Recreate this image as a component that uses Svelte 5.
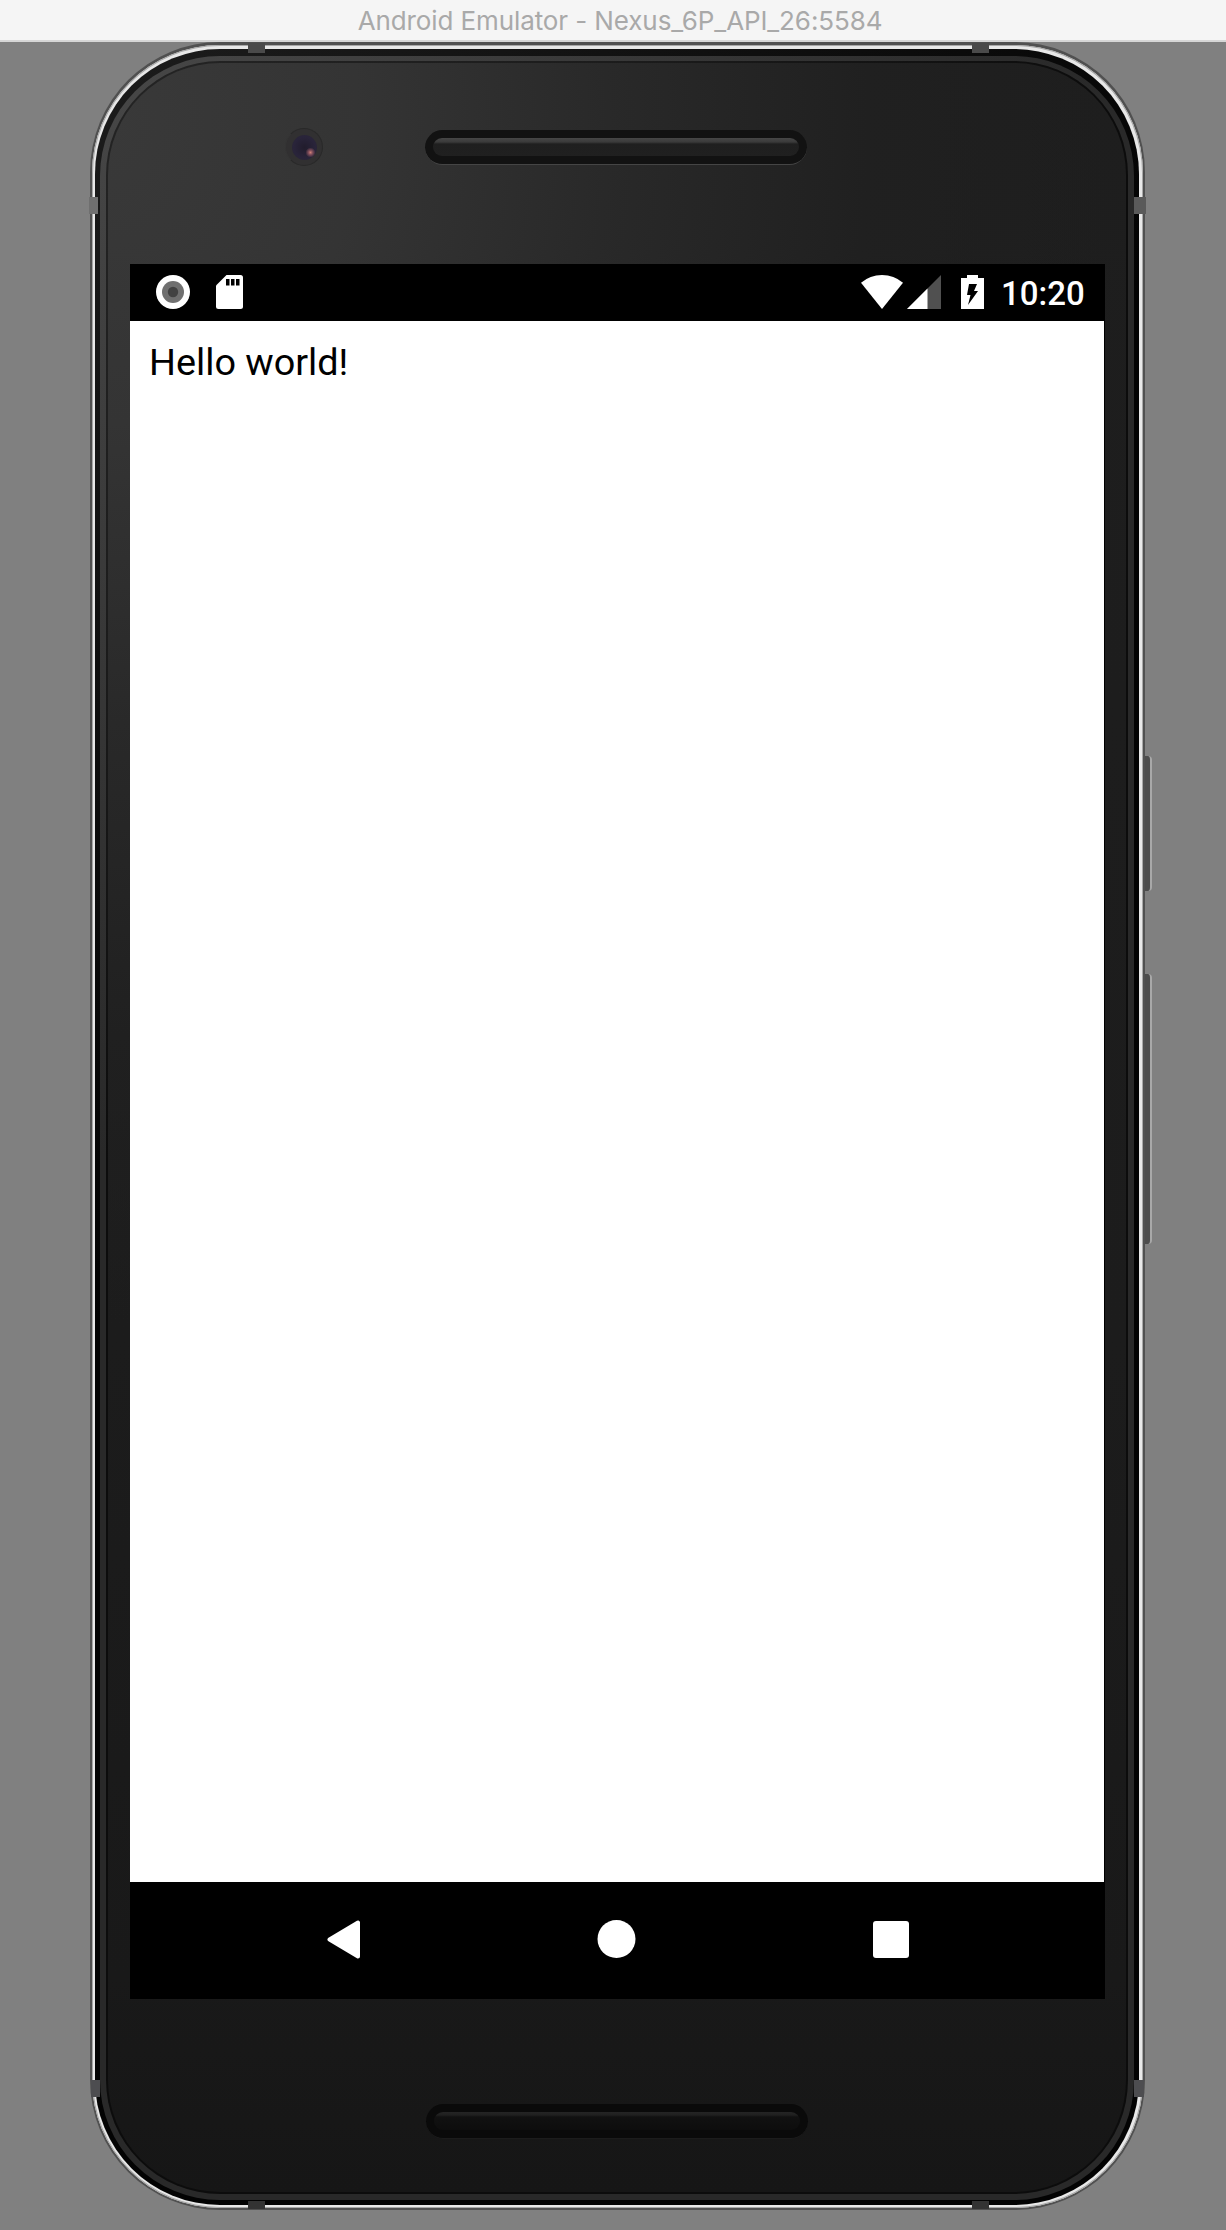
<script>
  const time = '10:20';
</script>

<div class="window">
  <header class="titlebar">Android Emulator - Nexus_6P_API_26:5584</header>
  <div class="stage">
    <div class="edge">
      <i class="key power"></i>
      <i class="key volume"></i>
      <i class="band t l1"></i><i class="band t r1"></i>
      <i class="band b l1"></i><i class="band b r1"></i>
      <i class="band s left up"></i><i class="band s right up"></i>
      <i class="band s left down"></i><i class="band s right down"></i>
      <div class="chrome">
        <div class="seam">
          <div class="lip">
            <div class="groove">
              <div class="face">
                <div class="top">
                  <span class="camera"><b></b></span>
                  <span class="speaker"><b></b></span>
                </div>
                <main class="screen">
                  <div class="status">
                    <svg width="34" height="34" viewBox="0 0 34 34">
                      <circle cx="17" cy="17" r="17" fill="#fff" />
                      <circle cx="17" cy="17" r="11" fill="#707070" />
                      <circle cx="17" cy="17" r="5.2" fill="#424242" />
                    </svg>
                    <svg class="sd" width="27" height="34" viewBox="0 0 27 34">
                      <path d="M10.5 0H24.5Q27 0 27 2.5V31.5Q27 34 24.5 34H2.5Q0 34 0 31.5V10.5Z" fill="#fff" />
                      <path d="M10 4h3.5v6.5H10zM15 4h3.5v6.5H15zM20 4h3.5v6.5H20z" fill="#000" />
                    </svg>
                    <span class="gap"></span>
                    <svg width="42" height="34" viewBox="0 0 42 34">
                      <path d="M21 34L0 7.8Q9 0 21 0T42 7.8Z" fill="#fff" />
                    </svg>
                    <svg class="cell" width="34" height="34" viewBox="0 0 34 34">
                      <path d="M34 0V34H0Z" fill="#505050" />
                      <path d="M20.5 13.5V34H0Z" fill="#fff" />
                    </svg>
                    <svg class="battery" width="23" height="34" viewBox="0 0 23 34">
                      <path d="M6 0H17V3H23V34H0V3H6Z" fill="#fff" />
                      <path d="M8 9H16L13 16H17L7 30L9.5 20H6Z" fill="#000" />
                    </svg>
                    <time>{time}</time>
                  </div>
                  <div class="content">Hello world!</div>
                  <nav>
                    <svg width="34" height="39" viewBox="0 0 34 39">
                      <path d="M2.5 19.5L31 2.5V36.5Z" fill="#fff" stroke="#fff" stroke-width="4" stroke-linejoin="round" />
                    </svg>
                    <svg class="home" width="39" height="39" viewBox="0 0 39 39">
                      <circle cx="19.5" cy="19" r="19" fill="#fff" />
                    </svg>
                    <svg class="recent" width="36" height="37" viewBox="0 0 36 37">
                      <rect width="36" height="37" rx="3" fill="#fff" />
                    </svg>
                  </nav>
                </main>
                <div class="bottom"><span class="speaker low"><b></b></span></div>
              </div>
            </div>
          </div>
        </div>
      </div>
    </div>
  </div>
</div>

<style>
  :global(body) {
    margin: 0;
    background: #808080;
  }
  .window {
    width: 1226px;
    height: 2230px;
    overflow: hidden;
    background: #808080;
    font-family: Roboto, sans-serif;
  }
  .window * {
    box-sizing: border-box;
  }
  svg {
    display: block;
    flex: none;
  }
  .titlebar {
    height: 42px;
    background: #f5f5f5;
    border-bottom: 2px solid #d6d6d6;
    color: #a9a9a9;
    font: 26px/42px Inter, sans-serif;
    letter-spacing: -0.1px;
    text-align: center;
    padding-left: 14px;
    white-space: nowrap;
  }
  .stage {
    padding: 0 81px 0 90px;
  }
  .edge {
    position: relative;
    height: 2168px;
    padding: 3px 2px 2px;
    border-radius: 130px;
    background: #505050;
  }
  .chrome {
    height: 100%;
    padding: 4px 4px 3px 3px;
    border-radius: 128px;
    background: #e8e8e8;
    box-shadow: inset 0 0 0 1px #a8a8a8;
  }
  .seam {
    height: 100%;
    padding: 7px 5px 5px;
    border-radius: 125px;
    background: linear-gradient(135deg, #1c1c1c, #030303 40%);
  }
  .lip {
    height: 100%;
    padding: 5px 6px 6px;
    border-radius: 120px;
    background: radial-gradient(1000px 1100px at 0 0, #474747, #3c3c3c 40%, #292929 100%);
  }
  .groove {
    height: 100%;
    padding: 2px;
    border-radius: 114px;
    background: radial-gradient(1000px 1100px at 0 0, #242424, #1c1c1c 50%, #0c0c0c 100%);
  }
  .face {
    height: 100%;
    padding: 0 22px;
    border-radius: 112px;
    background: radial-gradient(
        1000px 1200px at 0 60px,
        #393939,
        #343434 25%,
        #292929 50%,
        #202020 76%,
        rgba(30, 30, 30, 0) 100%
      ),
      linear-gradient(#1e1e1e, #1c1c1c 60%, #191919 90%, #161616);
  }
  .top {
    height: 201px;
    padding: 65px 0 0 155px;
    display: flex;
    align-items: flex-start;
  }
  .camera {
    width: 38px;
    height: 38px;
    border-radius: 50%;
    background: #313031;
    border: 1px solid #292929;
    border-left-color: #353535;
    display: grid;
    place-items: center;
  }
  .camera b {
    width: 25px;
    height: 25px;
    border-radius: 50%;
    background: radial-gradient(circle at 74% 70%, #d08078 0, #84505c 2px, transparent 5px),
      radial-gradient(circle, #211c2c 0, #29243a 60%, #2b2733);
  }
  .speaker {
    width: 382px;
    height: 35px;
    margin: 2px 0 0 102px;
    padding: 8px;
    border-radius: 18px;
    background: #121212;
    border-bottom: 1px solid #454545;
  }
  .speaker b {
    display: block;
    height: 18px;
    border-radius: 9px;
    background: linear-gradient(#474747, #3a3a3a 4px, #1f1f1f 6px, #202020);
  }
  .screen {
    width: 975px;
    height: 1735px;
    background: #000;
    display: flex;
    flex-direction: column;
  }
  .status {
    height: 57px;
    background: #000;
    display: flex;
    align-items: flex-start;
    padding: 11px 20px 0 25.5px;
  }
  .sd {
    margin-left: 26.5px;
  }
  .gap {
    flex: 1;
  }
  .cell {
    margin-left: 4px;
  }
  .battery {
    margin-left: 20px;
  }
  time {
    margin-left: 17px;
    width: 84px;
    color: #fff;
    font: 500 33px/38px Roboto, sans-serif;
  }
  .content {
    flex: 1;
    margin-right: 1px;
    padding: 17px 19px;
    background: #fff;
    color: #000;
    font-size: 37.8px;
    line-height: 48px;
  }
  nav {
    height: 117px;
    background: #000;
    display: flex;
    align-items: center;
    padding-left: 197px;
    padding-bottom: 2px;
  }
  .home {
    margin-left: 236px;
  }
  .recent {
    margin-left: 237px;
  }
  .bottom {
    display: flex;
    padding-top: 103px;
    padding-left: 296px;
  }
  .low {
    margin-left: 0;
    background: #0a0a0a;
    border-color: #1c1c1c;
  }
  .low b {
    background: linear-gradient(#242424, #202020 3px, #111 5px, #0d0d0d);
  }
  .key {
    position: absolute;
    left: 1055px;
    width: 7px;
    background: #4c4c4c;
    border-right: 2px solid #a8a8a8;
    border-radius: 0 4px 4px 0;
  }
  .power {
    top: 714px;
    height: 135px;
  }
  .volume {
    top: 932px;
    height: 270px;
  }
  .band {
    position: absolute;
    background: #4a4a4a;
  }
  .t,
  .b {
    width: 17px;
    height: 10px;
  }
  .t {
    top: 1px;
  }
  .b {
    bottom: 1px;
    height: 8px;
    background: #333;
  }
  .l1 {
    left: 158px;
  }
  .r1 {
    left: 882px;
  }
  .s {
    width: 9px;
    height: 17px;
    background: #6f6f6f;
  }
  .left {
    left: -1px;
  }
  .right {
    right: -1px;
    width: 12px;
    background: #5a5a5a;
  }
  .up {
    top: 155px;
  }
  .down {
    top: 2038px;
    background: #4d4d50;
  }
  .down.left {
    left: 1px;
  }
  .down.right {
    right: 1px;
    width: 10px;
  }
</style>
